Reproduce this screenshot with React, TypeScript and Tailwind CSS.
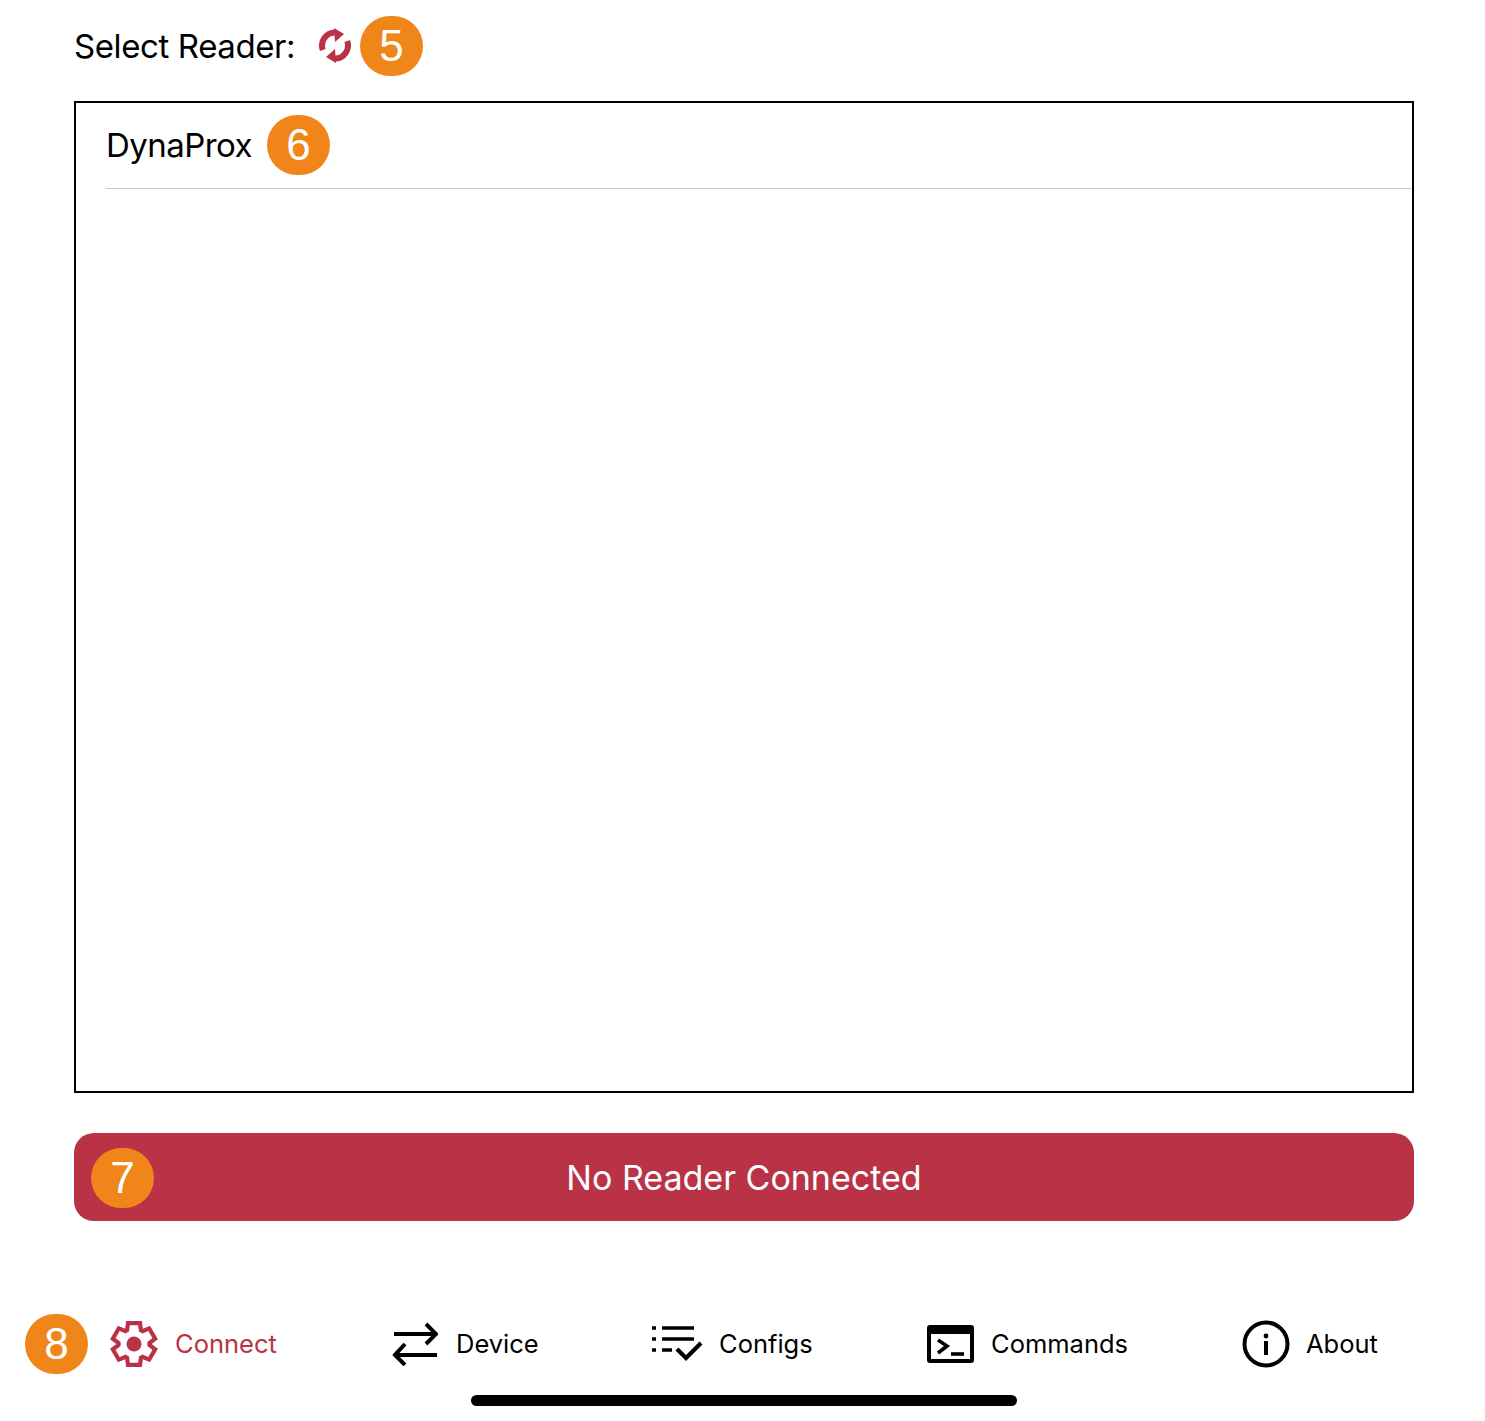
const RED = "#b93246";

const gearPath = () => {
  // six tooth gear, built from polar points
  const pts: string[] = [];
  for (let i = 0; i < 6; i++) {
    const a = (i * 60 - 90) * (Math.PI / 180);
    const at = (r: number, d: number) =>
      `${(24 + r * Math.cos(a + d)).toFixed(2)} ${(24 + r * Math.sin(a + d)).toFixed(2)}`;
    pts.push(at(15.5, -0.46), at(21.8, -0.28), at(21.8, 0.28), at(15.5, 0.46));
  }
  return "M" + pts.join("L") + "Z";
};

const Badge = ({ n, className = "" }: { n: number; className?: string }) => (
  <div
    className={`flex h-[60px] w-[63px] shrink-0 items-center justify-center rounded-full bg-[#f0851a] text-[44px] leading-none text-white font-['Liberation_Sans',sans-serif] ${className}`}
  >
    {n}
  </div>
);

const SyncIcon = () => (
  <svg viewBox="0 0 32 36" className="h-[36px] w-[32px]" fill="none">
    <path d="M3.800 21.900A13 13 0 0 1 16 4.500" stroke={RED} strokeWidth="6" />
    <path d="M28.200 13.100A13 13 0 0 1 16 30.500" stroke={RED} strokeWidth="6" />
    <path d="M15 0L25 6L16 14Z" fill={RED} />
    <path d="M17 35L7 29L16 21Z" fill={RED} />
  </svg>
);

const GearIcon = () => (
  <svg viewBox="0 0 48 48" className="h-[48px] w-[48px]" fill="none">
    <path d={gearPath()} stroke={RED} strokeWidth="4.2" strokeLinejoin="miter" />
    <circle cx="24" cy="24" r="7.500" fill={RED} />
  </svg>
);

const SwapIcon = () => (
  <svg viewBox="0 0 46 44" className="h-[44px] w-[46px]" fill="none" stroke="#000" strokeWidth="4">
    <path d="M2 12H44M34 2L44 12L34 22" />
    <path d="M45 33H3M13 22L3 33L13 43" />
  </svg>
);

const ConfigsIcon = () => (
  <svg viewBox="0 0 51 36" className="h-[36px] w-[51px]" fill="none" stroke="#000" strokeWidth="3.600">
    <path d="M0 2H4M10 2H42M0 13H4M10 13H42M0 24H4M10 24H20" />
    <path d="M25 23L34 32L49 17" strokeWidth="4.200" />
  </svg>
);

const TerminalIcon = () => (
  <svg viewBox="0 0 47 38" className="h-[38px] w-[47px]">
    <rect x="0" y="0" width="47" height="38" rx="3" fill="#000" />
    <rect x="4" y="9" width="39" height="25" fill="#fff" />
    <path d="M11 15L20 21L11 28" fill="none" stroke="#000" strokeWidth="3.600" />
    <path d="M24 29H37" stroke="#000" strokeWidth="3.600" />
  </svg>
);

const InfoIcon = () => (
  <svg viewBox="0 0 48 48" className="h-[48px] w-[48px]" fill="none">
    <circle cx="24" cy="24" r="21.500" stroke="#000" strokeWidth="4" />
    <circle cx="24" cy="16" r="2.400" fill="#000" />
    <rect x="22" y="21" width="4" height="14" fill="#000" />
  </svg>
);

const navItems = [
  { label: "Connect", icon: <GearIcon />, width: "w-[282px]", gap: "gap-[17px]", color: "text-[#b93246]" },
  { label: "Device", icon: <SwapIcon />, width: "w-[260px]", gap: "gap-[18px]", color: "text-black" },
  { label: "Configs", icon: <ConfigsIcon />, width: "w-[275px]", gap: "gap-[16px]", color: "text-black" },
  { label: "Commands", icon: <TerminalIcon />, width: "w-[315px]", gap: "gap-[17px]", color: "text-black" },
  { label: "About", icon: <InfoIcon />, width: "w-[170px]", gap: "gap-[16px]", color: "text-black" },
];

export default function App() {
  return (
    <div className="flex h-[1421px] w-[1485px] flex-col overflow-hidden bg-white font-['Inter',sans-serif] text-black">
      <div className="mt-4 flex h-[60px] items-center pl-[74px]">
        <span className="w-[245px] pt-[2px] text-[33px] tracking-[-0.4px]">Select Reader:</span>
        <SyncIcon />
        <Badge n={5} className="ml-[9px]" />
      </div>

      <div className="ml-[74px] mt-[25px] h-[992px] w-[1340px] border-2 border-black">
        <div className="ml-[30px] flex h-[86px] items-center border-b border-[#c8c8c8] pb-[2px]">
          <span className="w-[161px] pt-[2px] text-[33px] tracking-[-0.55px]">DynaProx</span>
          <Badge n={6} />
        </div>
      </div>

      <div className="relative ml-[74px] mt-10 flex h-[88px] w-[1340px] items-center justify-center rounded-[20px] bg-[#b93246] text-[34px] text-white">
        <Badge n={7} className="absolute left-[17px] top-[15px]" />
        No Reader Connected
      </div>

      <nav className="mt-[93px] flex h-[60px] items-center pl-[25px]">
        <Badge n={8} className="mr-[22px]" />
        {navItems.map((item) => (
          <div key={item.label} className={`flex shrink-0 items-center ${item.width} ${item.gap}`}>
            {item.icon}
            <span className={`text-[25.5px] ${item.color}`}>{item.label}</span>
          </div>
        ))}
      </nav>

      <div className="ml-[471px] mt-[21px] h-[11px] w-[546px] rounded-full bg-black" />
    </div>
  );
}
